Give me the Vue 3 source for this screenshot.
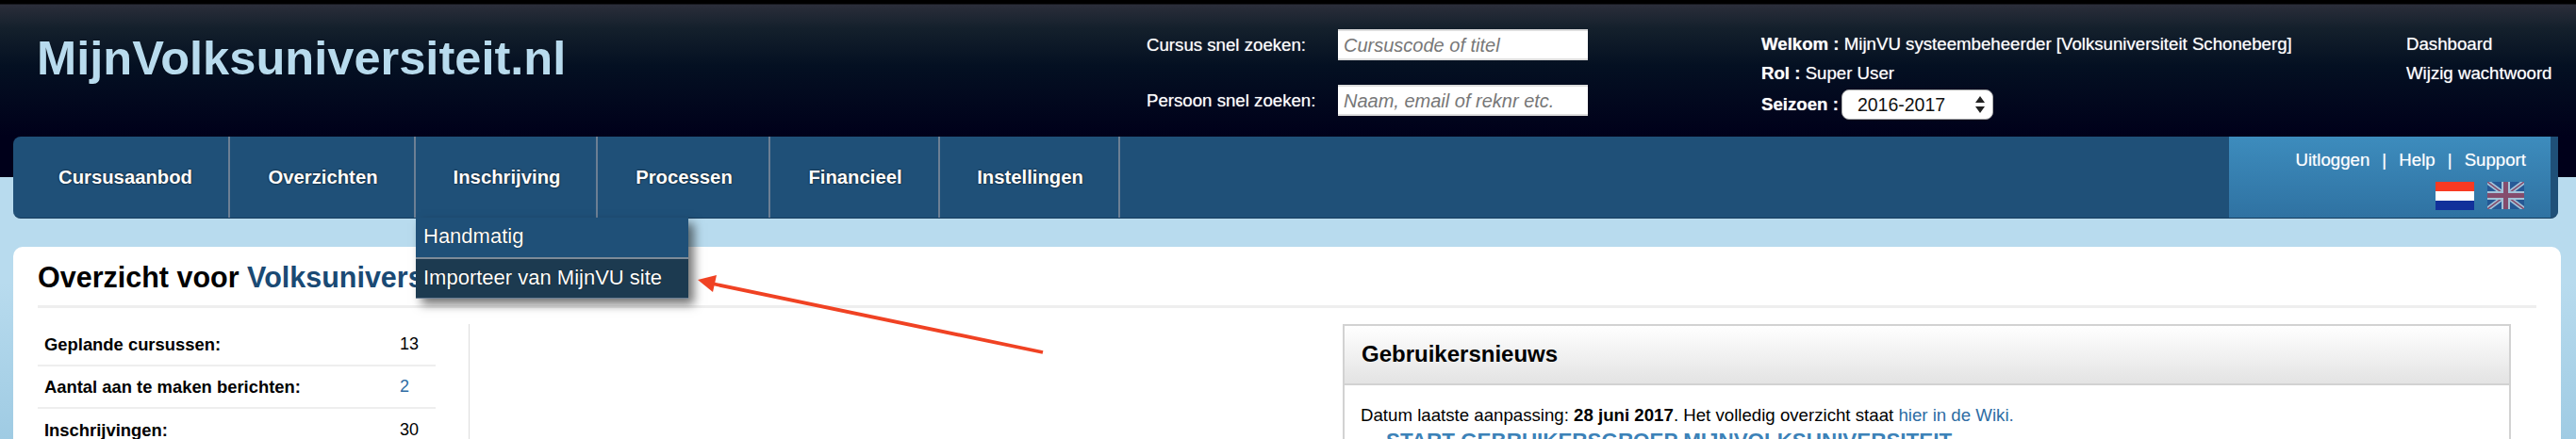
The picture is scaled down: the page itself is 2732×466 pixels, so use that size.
<template>
  <div class="page">
    <header class="top">
      <div class="logo">MijnVolksuniversiteit.nl</div>
      <div class="search">
        <label class="search-row">
          <span>Cursus snel zoeken:</span>
          <input type="text" placeholder="Cursuscode of titel" />
        </label>
        <label class="search-row">
          <span>Persoon snel zoeken:</span>
          <input type="text" placeholder="Naam, email of reknr etc." />
        </label>
      </div>
      <div class="user">
        <div><b>Welkom :</b> MijnVU systeembeheerder [Volksuniversiteit Schoneberg]</div>
        <div><b>Rol :</b> Super User</div>
        <div class="season">
          <b>Seizoen :</b>
          <span class="select">
            <span>2016-2017</span>
            <svg width="12" height="20" viewBox="0 0 12 20"><path d="M6 1l5 7H1zM6 19l-5-7h10z" fill="#222" /></svg>
          </span>
        </div>
      </div>
      <div class="quick">
        <div>Dashboard</div>
        <div>Wijzig wachtwoord</div>
      </div>
    </header>

    <nav class="nav">
      <div v-for="item in menu" :key="item.label" class="nav-item" :style="{ width: item.width + 'px' }">
        {{ item.label }}
        <div v-if="item.sub" class="dropdown">
          <div class="drop-row">Handmatig</div>
          <div class="drop-row active">Importeer van MijnVU site</div>
        </div>
      </div>
      <div class="nav-right">
        <div class="links">
          <span>Uitloggen</span><i>|</i><span>Help</span><i>|</i><span>Support</span>
        </div>
        <div class="flags">
          <svg width="41" height="30" viewBox="0 0 41 30">
            <rect width="41" height="10" fill="#f83a22" />
            <rect y="10" width="41" height="10" fill="#fff" />
            <rect y="20" width="41" height="10" fill="#12319a" />
          </svg>
          <svg class="uk" width="39" height="29" viewBox="0 0 39 29">
            <rect width="39" height="29" fill="#1c3f86" />
            <path d="M0 0L39 29M39 0L0 29" stroke="#fff" stroke-width="5" />
            <path d="M0 0L39 29M39 0L0 29" stroke="#c8283c" stroke-width="1.6" />
            <path d="M19.5 0V29M0 14.5H39" stroke="#fff" stroke-width="9" />
            <path d="M19.5 0V29M0 14.5H39" stroke="#c8283c" stroke-width="5" />
          </svg>
        </div>
      </div>
      <div class="nav-end"></div>
    </nav>

    <main class="panel">
      <h1 class="title">Overzicht voor <span>Volksuniversiteit Schoneberg</span></h1>
      <div class="columns">
        <div class="stats">
          <div v-for="row in stats" :key="row.label" class="stat">
            <b>{{ row.label }}</b>
            <span class="val" :class="{ link: row.link }">{{ row.value }}</span>
          </div>
        </div>
        <section class="news">
          <h2>Gebruikersnieuws</h2>
          <div class="news-body">
            <p>Datum laatste aanpassing: <b>28 juni 2017</b>. Het volledig overzicht staat <a>hier in de Wiki.</a></p>
            <h3>START GEBRUIKERSGROEP MIJNVOLKSUNIVERSITEIT.</h3>
          </div>
        </section>
      </div>
    </main>

    <svg class="arrow" width="380" height="90" viewBox="735 290 380 90">
      <line x1="1106" y1="374" x2="755" y2="301" stroke="#f04223" stroke-width="3.8" />
      <polygon points="740,297 760,292 756,310" fill="#f04223" />
    </svg>
  </div>
</template>

<script setup>
const menu = [
  { label: 'Cursusaanbod', width: 230 },
  { label: 'Overzichten', width: 197 },
  { label: 'Inschrijving', width: 193, sub: true },
  { label: 'Processen', width: 183 },
  { label: 'Financieel', width: 180 },
  { label: 'Instellingen', width: 191 }
]

const stats = [
  { label: 'Geplande cursussen:', value: '13' },
  { label: 'Aantal aan te maken berichten:', value: '2', link: true },
  { label: 'Inschrijvingen:', value: '30' }
]
</script>

<style>
html, body {
  overflow: hidden;
}
</style>

<style scoped>
.page {
  position: relative;
  width: 2732px;
  height: 466px;
  overflow: hidden;
  font-family: "Liberation Sans", Arial, sans-serif;
  color: #000;
  background:
    linear-gradient(#000 0, #000 4px, #2b2e3a 5px, #14202c 30px, #041022 70px, #00001a 145px, #00001a 188px, transparent 188px),
    linear-gradient(#b8dbee 188px, #b8dbee 300px, #9fcbe3 466px);
}

.top {
  height: 145px;
  display: flex;
  color: #fff;
  font-size: 18.67px;
  text-shadow: 0 0 1px rgba(255, 255, 255, 0.6);
}

.logo {
  width: 1216px;
  padding: 37px 0 0 39px;
  box-sizing: border-box;
  font-size: 50.6px;
  line-height: 50px;
  font-weight: bold;
  color: #b8dbee;
  text-shadow: 0 0 1px #000;
}

.search {
  width: 652px;
  padding-top: 31px;
  box-sizing: border-box;
  display: flex;
  flex-direction: column;
  gap: 26px;
}

.search-row {
  display: flex;
  align-items: center;
  height: 33px;
}

.search-row span {
  width: 203px;
}

.search-row input {
  width: 265px;
  height: 33px;
  box-sizing: border-box;
  border: none;
  outline: none;
  padding: 2px 6px 0;
  background: #fff;
  box-shadow: inset 0 2px 0 #ddd, inset 0 -2px 0 #ddd;
  font-family: inherit;
  font-size: 20px;
  font-style: italic;
}

.search-row input::placeholder {
  color: #777;
}

.user {
  width: 684px;
  padding-top: 36px;
  box-sizing: border-box;
}

.user > div {
  height: 31px;
  line-height: 22px;
  white-space: nowrap;
}

.season {
  display: flex;
  align-items: center;
  gap: 3px;
  margin-top: -3px;
}

.select {
  width: 161px;
  height: 32px;
  box-sizing: border-box;
  padding: 0 7px 0 16px;
  display: flex;
  align-items: center;
  justify-content: space-between;
  background: #fff;
  border: 1px solid #aaa;
  border-radius: 8px;
  color: #111;
  font-size: 19.5px;
  text-shadow: none;
}

.quick {
  padding-top: 36px;
  white-space: nowrap;
}

.quick div {
  height: 31px;
  line-height: 22px;
}

.nav {
  height: 86px;
  margin: 0 19px 0 14px;
  display: flex;
  background: #1f5078;
  border-bottom: 1px solid #173d5e;
  box-sizing: content-box;
  border-radius: 8px 0 8px 8px;
  position: relative;
}

.nav-item {
  position: relative;
  flex: none;
  box-sizing: border-box;
  border-right: 2px solid #6c7f94;
  display: flex;
  align-items: center;
  justify-content: center;
  padding: 1px 0 0 2px;
  color: #fff;
  font-size: 20.3px;
  font-weight: bold;
  text-shadow: 0 0 2px #000;
}

.nav-item:first-child {
  padding-left: 10px;
}

.dropdown {
  position: absolute;
  z-index: 3;
  top: 86px;
  left: 0;
  width: 289px;
  height: 86px;
  box-sizing: border-box;
  background: #1f5078;
  box-shadow: 6px 6px 10px rgba(0, 0, 0, 0.55);
  font-size: 22px;
  font-weight: normal;
  text-shadow: 0 0 1px #000;
  border-bottom: 1px solid #6c7f94;
}

.drop-row {
  height: 42px;
  line-height: 40px;
  padding-left: 8px;
  white-space: nowrap;
}

.drop-row.active {
  height: 43px;
  background: #1c3a50;
  border-top: 2px solid #7d8b98;
  box-sizing: border-box;
  line-height: 40px;
}

.nav-right {
  margin-left: auto;
  width: 341px;
  box-sizing: border-box;
  padding: 14px 26px 0 0;
  background: linear-gradient(#3d8cbd, #2f72a2);
  color: #fff;
  font-size: 18.67px;
}

.links {
  display: flex;
  justify-content: flex-end;
  line-height: 22px;
  text-shadow: 0 0 1px rgba(255, 255, 255, 0.5);
}

.links i {
  font-style: normal;
  width: 17px;
  margin: 0 7px;
  text-align: center;
}

.flags {
  display: flex;
  justify-content: flex-end;
  gap: 14px;
  margin: 12px 2px 0 0;
}

.uk {
  opacity: 0.55;
}

.nav-end {
  width: 8px;
  background: #1f5078;
  border-radius: 0 0 8px 0;
}

.panel {
  margin: 30px 16px 0 14px;
  padding: 0 26px;
  height: 240px;
  background: #fff;
  border-radius: 10px 10px 0 0;
}

.title {
  margin: 0;
  height: 65px;
  box-sizing: border-box;
  padding-top: 15px;
  border-bottom: 3px solid #eee;
  font-size: 30.5px;
  line-height: 35px;
  font-weight: bold;
  white-space: nowrap;
}

.title span {
  color: #1a4a74;
}

.columns {
  display: flex;
  padding-top: 17px;
}

.stats {
  width: 458px;
  flex: none;
  box-sizing: border-box;
  padding-right: 35px;
  border-right: 1px solid #ddd;
  height: 140px;
  margin-right: 926px;
}

.stat {
  height: 45px;
  box-sizing: border-box;
  padding: 0 0 0 7px;
  border-bottom: 2px solid #eee;
  display: flex;
  align-items: center;
  font-size: 18.4px;
}

.stat:last-child {
  border-bottom: none;
}

.stat b {
  width: 377px;
}

.val {
  font-size: 18px;
}

.val.link {
  color: #2e6da4;
}

.news {
  width: 1239px;
  height: 200px;
  flex: none;
  box-sizing: border-box;
  border: 2px solid #d2d2d2;
  border-bottom: none;
}

.news h2 {
  margin: 0;
  height: 63px;
  box-sizing: border-box;
  padding-left: 18px;
  background: linear-gradient(#fff, #e3e3e3);
  border-bottom: 2px solid #d2d2d2;
  font-size: 24px;
  line-height: 59px;
}

.news-body {
  padding: 21px 17px 0;
  font-size: 18.67px;
}

.news-body p {
  margin: 0;
  line-height: 22px;
}

.news-body a {
  color: #2e6da4;
}

.news-body h3 {
  margin: 3px 0 0 27px;
  font-size: 22.4px;
  line-height: 26px;
  color: #3c82b8;
  white-space: nowrap;
}

.arrow {
  position: absolute;
  left: 735px;
  top: 290px;
  z-index: 4;
}
</style>
